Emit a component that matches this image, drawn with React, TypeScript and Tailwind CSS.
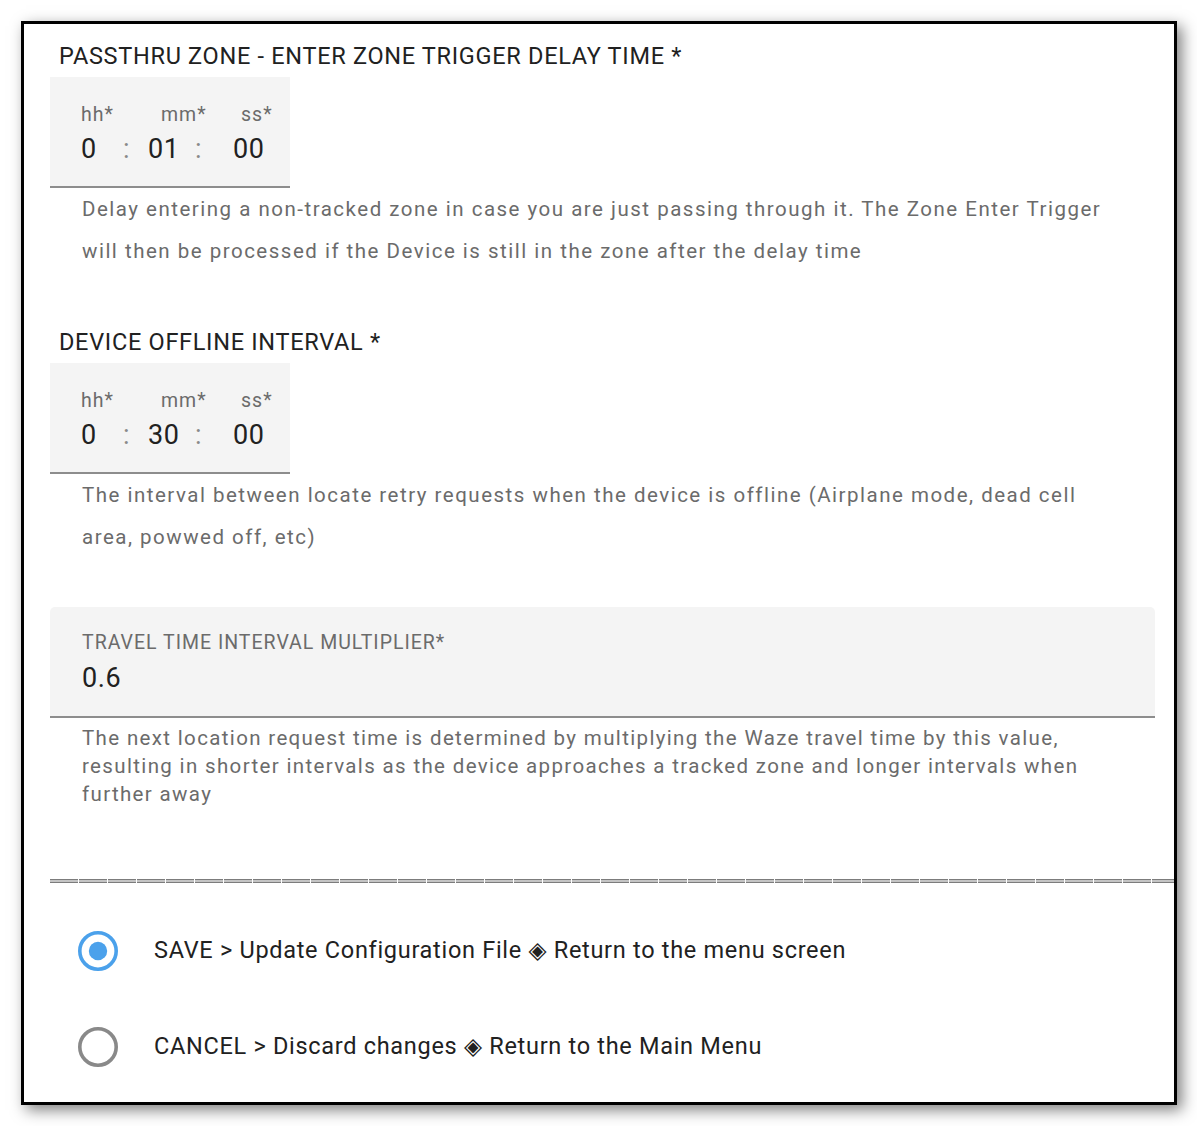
const font = "font-['Roboto','DejaVu_Sans',sans-serif]";

function TimeField({ hh, mm, ss }: { hh: string; mm: string; ss: string }) {
  return (
    <div className="w-[240px] h-[111px] bg-[#f4f4f4] border-b-2 border-[#8d8d8d] pl-[31px] pt-[26px]">
      <div className="flex text-[19.5px] leading-[24px] tracking-[1px] text-[#6b6b6b]">
        <span className="w-[80px]">hh*</span>
        <span className="w-[80px]">mm*</span>
        <span>ss*</span>
      </div>
      <div className="flex mt-[6px] text-[27px] leading-[32px] tracking-[0.6px] text-[#212121]">
        <span className="w-[42px]">{hh}</span>
        <span className="w-[25px] text-[#8a8a8a]">:</span>
        <span className="w-[47px]">{mm}</span>
        <span className="w-[38px] text-[#8a8a8a]">:</span>
        <span>{ss}</span>
      </div>
    </div>
  );
}

function Radio({ checked, label }: { checked: boolean; label: string }) {
  return (
    <div className="flex items-center h-[56px] pl-[28px]">
      <svg width="40" height="40" viewBox="0 0 40 40">
        <circle
          cx="20"
          cy="20"
          r="18.2"
          fill="none"
          stroke={checked ? '#4ba1eb' : '#898989'}
          strokeWidth="3.6"
        />
        {checked && <circle cx="20" cy="20" r="9.2" fill="#4ba1eb" />}
      </svg>
      <span className="ml-[36px] text-[23.5px] tracking-[0.7px] text-[#212121]">{label}</span>
    </div>
  );
}

export default function App() {
  return (
    <div className={`bg-white w-[1197px] h-[1126px] pt-[21px] pl-[21px] ${font}`}>
      <div className="w-[1156px] h-[1084px] border-[3px] border-black bg-white shadow-[5px_5px_14px_rgba(0,0,0,0.5)] overflow-hidden pl-[26px] pr-[19px] pt-[18px]">
        {/* passthru zone */}
        <div className="pl-[9px] text-[23.5px] leading-[28px] tracking-[0.7px] text-[#212121]">
          PASSTHRU ZONE - ENTER ZONE TRIGGER DELAY TIME *
        </div>
        <div className="mt-[7px]">
          <TimeField hh="0" mm="01" ss="00" />
        </div>
        <p className="pl-[32px] pr-[50px] text-[20.5px] leading-[42px] tracking-[1.5px] text-[#6b6b6b]">
          Delay entering a non-tracked zone in case you are just passing through it. The Zone Enter Trigger will
          then be processed if the Device is still in the zone after the delay time
        </p>

        {/* offline interval */}
        <div className="mt-[56px] pl-[9px] text-[23.5px] leading-[28px] tracking-[0.7px] text-[#212121]">
          DEVICE OFFLINE INTERVAL *
        </div>
        <div className="mt-[7px]">
          <TimeField hh="0" mm="30" ss="00" />
        </div>
        <p className="pl-[32px] pr-[50px] text-[20.5px] leading-[42px] tracking-[1.5px] text-[#6b6b6b]">
          The interval between locate retry requests when the device is offline (Airplane mode, dead cell area,
          powwed off, etc)
        </p>

        {/* travel time multiplier */}
        <div className="mt-[49px] h-[111px] rounded-t-[5px] bg-[#f4f4f4] border-b-2 border-[#8d8d8d] pl-[32px] pt-[24px]">
          <div className="text-[19.5px] leading-[24px] tracking-[1px] text-[#6b6b6b]">
            TRAVEL TIME INTERVAL MULTIPLIER*
          </div>
          <div className="mt-[7px] text-[27px] leading-[32px] tracking-[0.6px] text-[#212121]">0.6</div>
        </div>
        <p className="mt-[6px] pl-[32px] pr-[50px] text-[20.5px] leading-[28px] tracking-[1.35px] text-[#6b6b6b]">
          The next location request time is determined by multiplying the Waze travel time by this value,
          resulting in shorter intervals as the device approaches a tracked zone and longer intervals when
          further away
        </p>

        {/* divider */}
        <div className="mt-[71px] mr-[-19px] flex gap-px overflow-hidden">
          {Array.from({ length: 42 }).map((_, i) => (
            <div
              key={i}
              className="shrink-0 w-[28px] h-[4px] bg-[#c4c4c4] border-t-[1.5px] border-b-[1.5px] border-[#7c7c7c]"
            />
          ))}
        </div>

        {/* actions */}
        <div className="mt-[40px] flex flex-col gap-[40px]">
          <Radio checked label="SAVE > Update Configuration File ◈ Return to the menu screen" />
          <Radio checked={false} label="CANCEL > Discard changes ◈ Return to the Main Menu" />
        </div>
      </div>
    </div>
  );
}
